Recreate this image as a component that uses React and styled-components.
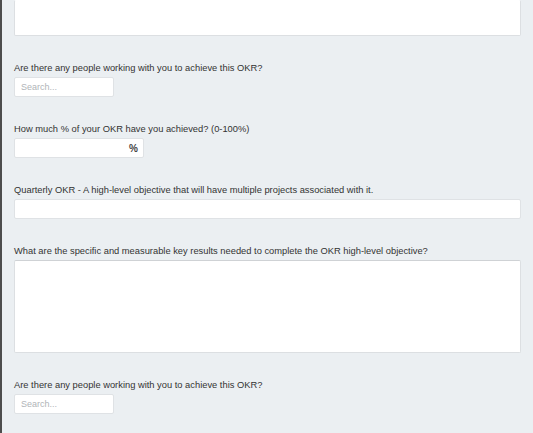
import React from "react";
import styled, { createGlobalStyle } from "styled-components";

const GlobalStyle = createGlobalStyle`
  html, body {
    margin: 0;
    padding: 0;
    background: #ebeff2;
    font-family: "Liberation Sans", Arial, sans-serif;
  }
`;

const Page = styled.div`
  border-left: solid 2px #4d4d4d;
  box-sizing: border-box;
  min-height: 433px;
  overflow: hidden;
  padding: 0 12px 0 12px;
  width: 533px;
`;

const Form = styled.form`
  display: flex;
  flex-direction: column;
  gap: 26px;
  width: 507px;
`;

const Field = styled.div`
  display: flex;
  flex-direction: column;
`;

const Label = styled.label`
  color: #333;
  font-size: 9.33px;
  line-height: 12px;
  margin-bottom: 3px;
  white-space: nowrap;
`;

const TextArea = styled.textarea`
  background: white;
  border: solid 1px #dcdfe2;
  border-top-color: ${(p) => (p.$cut ? "transparent" : "#cfd2d5")};
  border-radius: 2px;
  box-sizing: border-box;
  display: block;
  height: ${(p) => p.$height}px;
  margin: 0;
  outline: none;
  resize: none;
  width: 100%;
`;

const Input = styled.input`
  background: white;
  border: solid 1px #dfe2e5;
  border-radius: 2px;
  box-sizing: border-box;
  color: #333;
  font-family: inherit;
  font-size: 9px;
  height: 20px;
  margin: 0;
  outline: none;
  padding: 0 6px;
  width: ${(p) => p.$width || "100%"};
  &::placeholder {
    color: #b0b4b8;
  }
`;

const PercentBox = styled.div`
  align-items: center;
  background: white;
  border: solid 1px #dfe2e5;
  border-radius: 2px;
  box-sizing: border-box;
  display: flex;
  height: 20px;
  width: 130px;
`;

const BareInput = styled.input`
  background: transparent;
  border: none;
  flex: 1;
  font-family: inherit;
  font-size: 9px;
  min-width: 0;
  outline: none;
  padding: 0 6px;
`;

const Suffix = styled.span`
  color: #444;
  font-size: 10px;
  font-weight: bold;
  padding-right: 5px;
`;

const App = () => {
  return (
    <Page>
      <GlobalStyle />
      <Form>
        <Field>
          <TextArea $height={36} $cut />
        </Field>
        <Field>
          <Label>Are there any people working with you to achieve this OKR?</Label>
          <Input $width="100px" placeholder="Search..." />
        </Field>
        <Field>
          <Label>How much % of your OKR have you achieved? (0-100%)</Label>
          <PercentBox>
            <BareInput />
            <Suffix>%</Suffix>
          </PercentBox>
        </Field>
        <Field>
          <Label>
            Quarterly OKR - A high-level objective that will have multiple projects associated with it.
          </Label>
          <Input />
        </Field>
        <Field>
          <Label>
            What are the specific and measurable key results needed to complete the OKR high-level objective?
          </Label>
          <TextArea $height={93} />
        </Field>
        <Field>
          <Label>Are there any people working with you to achieve this OKR?</Label>
          <Input $width="100px" placeholder="Search..." />
        </Field>
      </Form>
    </Page>
  );
};

export default App;
